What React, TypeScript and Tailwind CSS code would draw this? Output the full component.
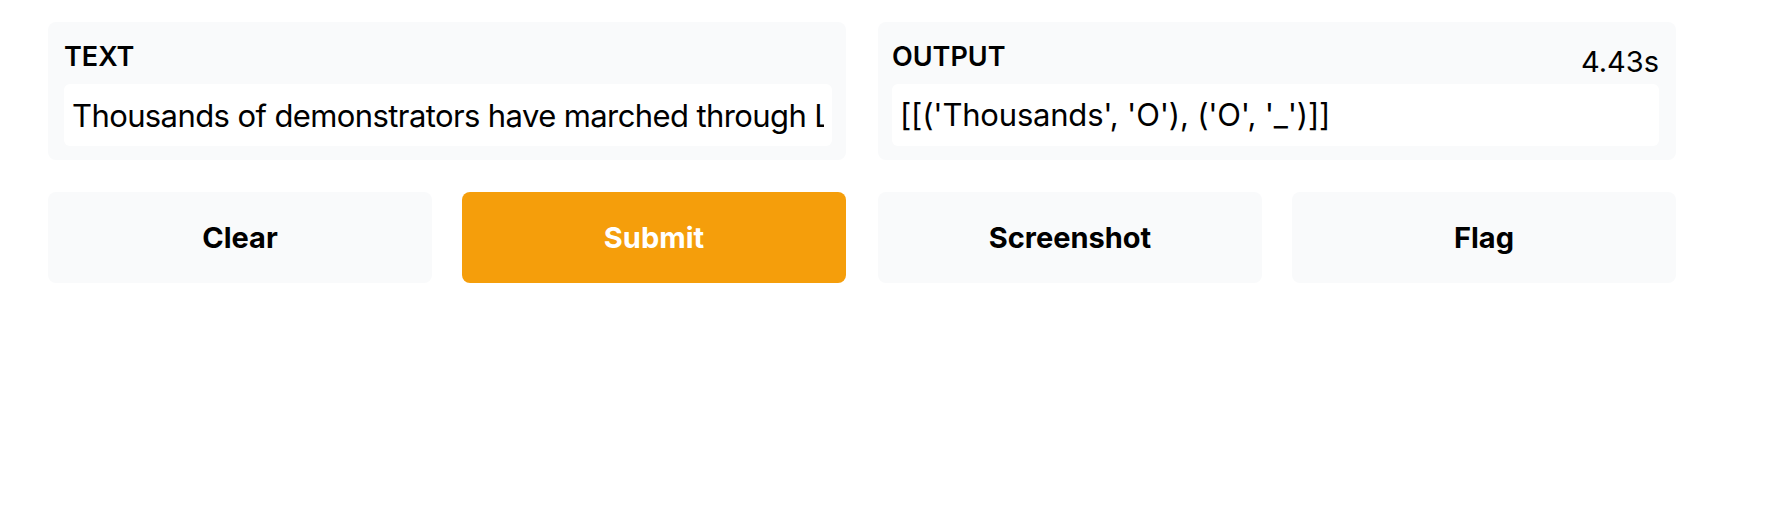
const INPUT_TEXT =
  "Thousands of demonstrators have marched through London to protest the war in Iraq and demand the withdrawal of British troops from that country.";

const OUTPUT_TEXT = "[[('Thousands', 'O'), ('O', '_')]]";

function Label({ children }: { children: string }) {
  return (
    <span className="block text-[27px] leading-[32px] font-semibold uppercase text-black mb-[11px]">
      {children}
    </span>
  );
}

function ActionButton({ label, primary }: { label: string; primary?: boolean }) {
  return (
    <button
      className={
        primary
          ? "h-[91px] rounded-lg bg-[#f59e0b] text-white text-[29px] font-bold"
          : "h-[91px] rounded-lg bg-[#f9fafb] text-black text-[29px] font-bold"
      }
    >
      {label}
    </button>
  );
}

export default function App() {
  return (
    <div className="min-h-[510px] bg-white pl-12 pt-[22px]" style={{ fontFamily: "Inter, 'Noto Sans', sans-serif" }}>
      <div className="w-[1628px] flex flex-col gap-8">
        <div className="grid grid-cols-2 gap-8">
          <label className="block rounded-lg bg-[#f9fafb] pt-[19px] pb-[14px] pl-4 pr-[14px]">
            <Label>Text</Label>
            <input
              readOnly
              value={INPUT_TEXT}
              className="block w-full h-[62px] rounded-md bg-white px-2 text-[31px] tracking-[-0.6px] text-black outline-none"
            />
          </label>
          <div className="relative rounded-lg bg-[#f9fafb] pt-[19px] pb-[14px] pl-[14px] pr-[17px]">
            <Label>Output</Label>
            <span className="absolute right-[17px] top-6 text-[29px] leading-[32px] text-black">4.43s</span>
            <div className="h-[62px] rounded-md bg-white px-2 text-[31px] leading-[62px] tracking-[-0.2px] whitespace-nowrap text-black">
              {OUTPUT_TEXT}
            </div>
          </div>
        </div>
        <div className="grid grid-cols-2 gap-8">
          <div className="grid grid-cols-2 gap-[30px]">
            <ActionButton label="Clear" />
            <ActionButton label="Submit" primary />
          </div>
          <div className="grid grid-cols-2 gap-[30px]">
            <ActionButton label="Screenshot" />
            <ActionButton label="Flag" />
          </div>
        </div>
      </div>
    </div>
  );
}
